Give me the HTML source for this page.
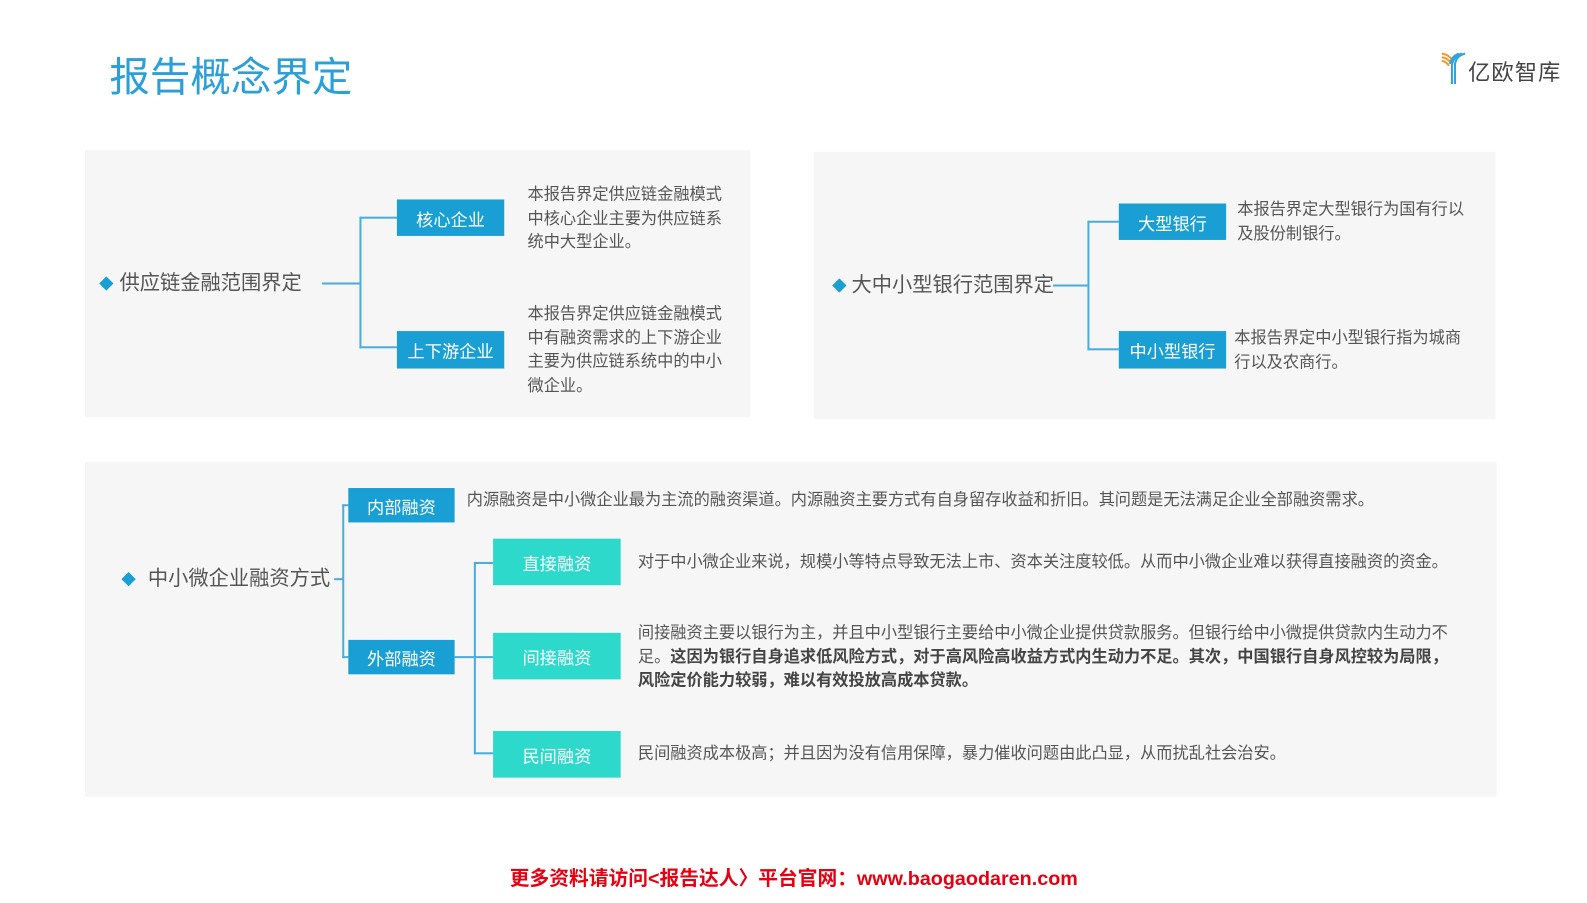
<!DOCTYPE html>
<html><head><meta charset="utf-8"><style>
*{margin:0;padding:0;box-sizing:border-box}
body{width:1587px;height:892px;background:#fff;position:relative;overflow:hidden;font-family:"Liberation Sans","Noto Sans CJK SC",sans-serif;color:#555}
#w{position:absolute;left:0;top:0;width:1587px;height:892px;transform:scale(1.0125);transform-origin:0 0}
.a{position:absolute}
.panel{position:absolute;background:#f6f6f6}
.box{position:absolute;color:#fff;font-size:17px;display:flex;align-items:center;justify-content:center;background:#1a9fd4}
.teal{background:#2cd9cb}
.ln{position:absolute;background:#4aaedc}
.t{position:absolute;font-size:16px;line-height:23.5px;color:#555;white-space:nowrap}
.lab{position:absolute;font-size:20px;color:#555;white-space:nowrap;line-height:24px}
.dia{position:absolute;width:10px;height:10px;background:#1a9fd4;transform:rotate(45deg)}
b{color:#444}
</style></head><body><div id="w">
<div class="a" style="left:108px;top:52px;font-size:40px;color:#2a9fd8;line-height:50px">报告概念界定</div>
<div class="a" style="left:1423px;top:51px;">
<svg width="25" height="32" viewBox="0 0 25 32"><path d="M1 2 Q9 3 12 10" stroke="#f39a2b" stroke-width="2" fill="none"/><path d="M1 5.5 Q8 6.5 10 12" stroke="#f39a2b" stroke-width="2" fill="none"/><path d="M1 9 Q6 10 8 14" stroke="#f39a2b" stroke-width="2" fill="none"/><path d="M24 2 Q15 4 14 13 L14 32" stroke="#2aa3df" stroke-width="2" fill="none"/><path d="M21 2 Q13 4 11 13 L11 32" stroke="#2aa3df" stroke-width="2" fill="none"/><path d="M18 2 Q11 4 9 12" stroke="#2aa3df" stroke-width="2" fill="none"/></svg></div>
<div class="a" style="left:1450px;top:58px;font-size:22px;color:#444;letter-spacing:1px;line-height:28px">亿欧智库</div>

<div class="panel" style="left:84px;top:148px;width:657px;height:264px"></div>
<div class="panel" style="left:804px;top:150px;width:673px;height:264px"></div>
<div class="panel" style="left:84px;top:456px;width:1394px;height:331px"></div>

<div class="dia" style="left:100px;top:275px"></div>
<div class="lab" style="left:118px;top:268px">供应链金融范围界定</div>
<div class="ln" style="left:318px;top:279px;width:38px;height:2px"></div>
<div class="ln" style="left:355px;top:214px;width:2px;height:130px"></div>
<div class="ln" style="left:355px;top:214px;width:37px;height:2px"></div>
<div class="ln" style="left:355px;top:342px;width:37px;height:2px"></div>
<div class="box" style="left:392px;top:197px;width:106px;height:36px">核心企业</div>
<div class="box" style="left:392px;top:327px;width:106px;height:37px">上下游企业</div>
<div class="t" style="left:521px;top:181px">本报告界定供应链金融模式<br>中核心企业主要为供应链系<br>统中大型企业。</div>
<div class="t" style="left:521px;top:299px">本报告界定供应链金融模式<br>中有融资需求的上下游企业<br>主要为供应链系统中的中小<br>微企业。</div>

<div class="dia" style="left:824px;top:277px"></div>
<div class="lab" style="left:841px;top:270px">大中小型银行范围界定</div>
<div class="ln" style="left:1040px;top:281px;width:35px;height:2px"></div>
<div class="ln" style="left:1074px;top:218px;width:2px;height:128px"></div>
<div class="ln" style="left:1074px;top:218px;width:31px;height:2px"></div>
<div class="ln" style="left:1074px;top:344px;width:31px;height:2px"></div>
<div class="box" style="left:1105px;top:201px;width:106px;height:36px">大型银行</div>
<div class="box" style="left:1105px;top:327px;width:106px;height:37px">中小型银行</div>
<div class="t" style="left:1222px;top:196px">本报告界定大型银行为国有行以<br>及股份制银行。</div>
<div class="t" style="left:1219px;top:323px">本报告界定中小型银行指为城商<br>行以及农商行。</div>

<div class="dia" style="left:122px;top:567px"></div>
<div class="lab" style="left:146px;top:560px">中小微企业融资方式</div>
<div class="ln" style="left:330px;top:571px;width:9px;height:2px"></div>
<div class="ln" style="left:338px;top:498px;width:2px;height:152px"></div>
<div class="ln" style="left:338px;top:498px;width:6px;height:2px"></div>
<div class="ln" style="left:338px;top:648px;width:6px;height:2px"></div>
<div class="box" style="left:344px;top:482px;width:105px;height:34px">内部融资</div>
<div class="box" style="left:344px;top:632px;width:105px;height:34px">外部融资</div>
<div class="ln" style="left:449px;top:648px;width:20px;height:2px"></div>
<div class="ln" style="left:468px;top:555px;width:2px;height:190px"></div>
<div class="ln" style="left:468px;top:555px;width:19px;height:2px"></div>
<div class="ln" style="left:468px;top:648px;width:19px;height:2px"></div>
<div class="ln" style="left:468px;top:743px;width:19px;height:2px"></div>
<div class="box teal" style="left:487px;top:532px;width:126px;height:46px">直接融资</div>
<div class="box teal" style="left:487px;top:625px;width:126px;height:46px">间接融资</div>
<div class="box teal" style="left:487px;top:722px;width:126px;height:46px">民间融资</div>
<div class="t" style="left:461px;top:483px">内源融资是中小微企业最为主流的融资渠道。内源融资主要方式有自身留存收益和折旧。其问题是无法满足企业全部融资需求。</div>
<div class="t" style="left:630px;top:544px">对于中小微企业来说，规模小等特点导致无法上市、资本关注度较低。从而中小微企业难以获得直接融资的资金。</div>
<div class="t" style="left:630px;top:614px">间接融资主要以银行为主，并且中小型银行主要给中小微企业提供贷款服务。但银行给中小微提供贷款内生动力不<br>足。<b>这因为银行自身追求低风险方式，对于高风险高收益方式内生动力不足。其次，中国银行自身风控较为局限，<br>风险定价能力较弱，难以有效投放高成本贷款。</b></div>
<div class="t" style="left:630px;top:733px">民间融资成本极高；并且因为没有信用保障，暴力催收问题由此凸显，从而扰乱社会治安。</div>

<div class="a" style="left:0;width:1568px;top:851px;text-align:center;font-size:19.5px;font-weight:bold;color:#e60012;white-space:nowrap">更多资料请访问&lt;报告达人〉平台官网：www.baogaodaren.com</div>
</div></body></html>
